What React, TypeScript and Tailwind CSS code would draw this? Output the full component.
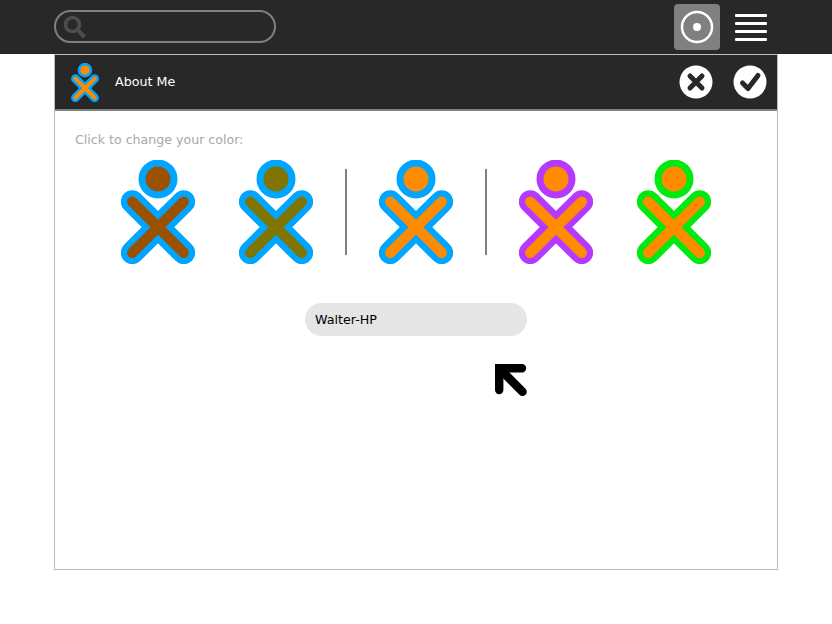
const Xo = ({ stroke, fill, className }: { stroke: string; fill: string; className?: string }) => (
  <svg viewBox="0 0 74 104" className={className} fill="none" strokeLinecap="round">
    <circle cx="37" cy="19" r="16" fill={fill} stroke={stroke} strokeWidth="7" />
    <path d="M11.3 41.7 L62.7 92.7 M62.7 41.7 L11.3 92.7" stroke={stroke} strokeWidth="23" />
    <path d="M11.3 41.7 L62.7 92.7 M62.7 41.7 L11.3 92.7" stroke={fill} strokeWidth="10.5" />
  </svg>
);

const Sep = () => <div className="w-[2px] h-[86px] bg-[#808080] mx-[32px] mt-[9px]" />;

export default function App() {
  return (
    <div className="w-[832px] h-[624px] bg-white overflow-hidden font-['DejaVu_Sans',sans-serif]">
      <div className="h-[54px] bg-[#282828] flex items-center pl-[54px] pr-[64px]">
        <div className="w-[222px] h-[33px] mt-[-1px] rounded-full border-2 border-[#808080] flex items-center pl-[8px]">
          <svg width="24" height="24" viewBox="0 0 24 24" fill="none" stroke="#4d4d4d" strokeLinecap="butt">
            <circle cx="8.5" cy="9.5" r="7" strokeWidth="3.7" />
            <path d="M13.5 15 L20.5 22" strokeWidth="4" />
          </svg>
        </div>
        <div className="ml-auto flex items-center gap-[15px]">
          <div className="w-[46px] h-[46px] rounded-[4px] bg-[#808080] flex items-center justify-center">
            <svg width="34" height="34" viewBox="0 0 34 34" fill="none">
              <circle cx="17" cy="17" r="15" stroke="white" strokeWidth="2.5" />
              <circle cx="17" cy="17" r="4" fill="white" />
            </svg>
          </div>
          <div className="flex flex-col gap-[5px] w-[32px] h-[28px] mr-[1px] justify-center">
            <div className="h-[3px] bg-white rounded-[1px]" />
            <div className="h-[3px] bg-white rounded-[1px]" />
            <div className="h-[3px] bg-white rounded-[1px]" />
            <div className="h-[3px] bg-white rounded-[1px]" />
          </div>
        </div>
      </div>
      <div className="ml-[54px] w-[724px] h-[516px] border border-[#bbbbbb] flex flex-col">
        <div className="h-[56px] shrink-0 bg-[#282828] border-b-2 border-[#808080] flex items-center pl-[15px] pr-[10px]">
          <Xo stroke="#00a5ff" fill="#ff8c00" className="w-[30px] h-[39px]" />
          <span className="ml-[15px] text-[12.7px] text-white">About Me</span>
          <div className="ml-auto flex items-center gap-[20px]">
            <svg width="34" height="34" viewBox="0 0 34 34">
              <circle cx="17" cy="17" r="16.5" fill="white" />
              <path d="M11 11 L23 23 M23 11 L11 23" stroke="#282828" strokeWidth="5" strokeLinecap="round" />
            </svg>
            <svg width="34" height="34" viewBox="0 0 34 34" fill="none">
              <circle cx="17" cy="17" r="16.5" fill="white" />
              <path d="M9.5 18 L15 23.5 L25 10.5" stroke="#282828" strokeWidth="5" strokeLinecap="round" strokeLinejoin="round" />
            </svg>
          </div>
        </div>
        <div className="flex-1 flex flex-col pt-[21px]">
          <p className="pl-[20px] text-[12.6px] leading-[16px] text-[#a8a8a8]">Click to change your color:</p>
          <div className="flex justify-center mt-[12px]">
            <Xo stroke="#00a5ff" fill="#9a5200" className="w-[74px] h-[104px]" />
            <Xo stroke="#00a5ff" fill="#807500" className="w-[74px] h-[104px] ml-[44px]" />
            <Sep />
            <Xo stroke="#00a5ff" fill="#ff8c00" className="w-[74px] h-[104px]" />
            <Sep />
            <Xo stroke="#b639ff" fill="#ff8c00" className="w-[74px] h-[104px]" />
            <Xo stroke="#00ea11" fill="#ff8c00" className="w-[74px] h-[104px] ml-[44px]" />
          </div>
          <div className="mt-[39px] mx-auto w-[222px] h-[33px] rounded-full bg-[#e5e5e5] flex items-center pl-[10px] pt-[1px] text-[12.7px] text-black">
            Walter-HP
          </div>
          <div className="mt-[28px] ml-[440px]">
            <svg width="33" height="33" viewBox="0 0 33 33" fill="none" stroke="black" strokeLinecap="round">
              <path d="M4.2 26 V4.2 H27" strokeWidth="8.4" strokeLinejoin="miter" />
              <path d="M6 6 L27.5 27.7" strokeWidth="8.6" />
            </svg>
          </div>
        </div>
      </div>
    </div>
  );
}
